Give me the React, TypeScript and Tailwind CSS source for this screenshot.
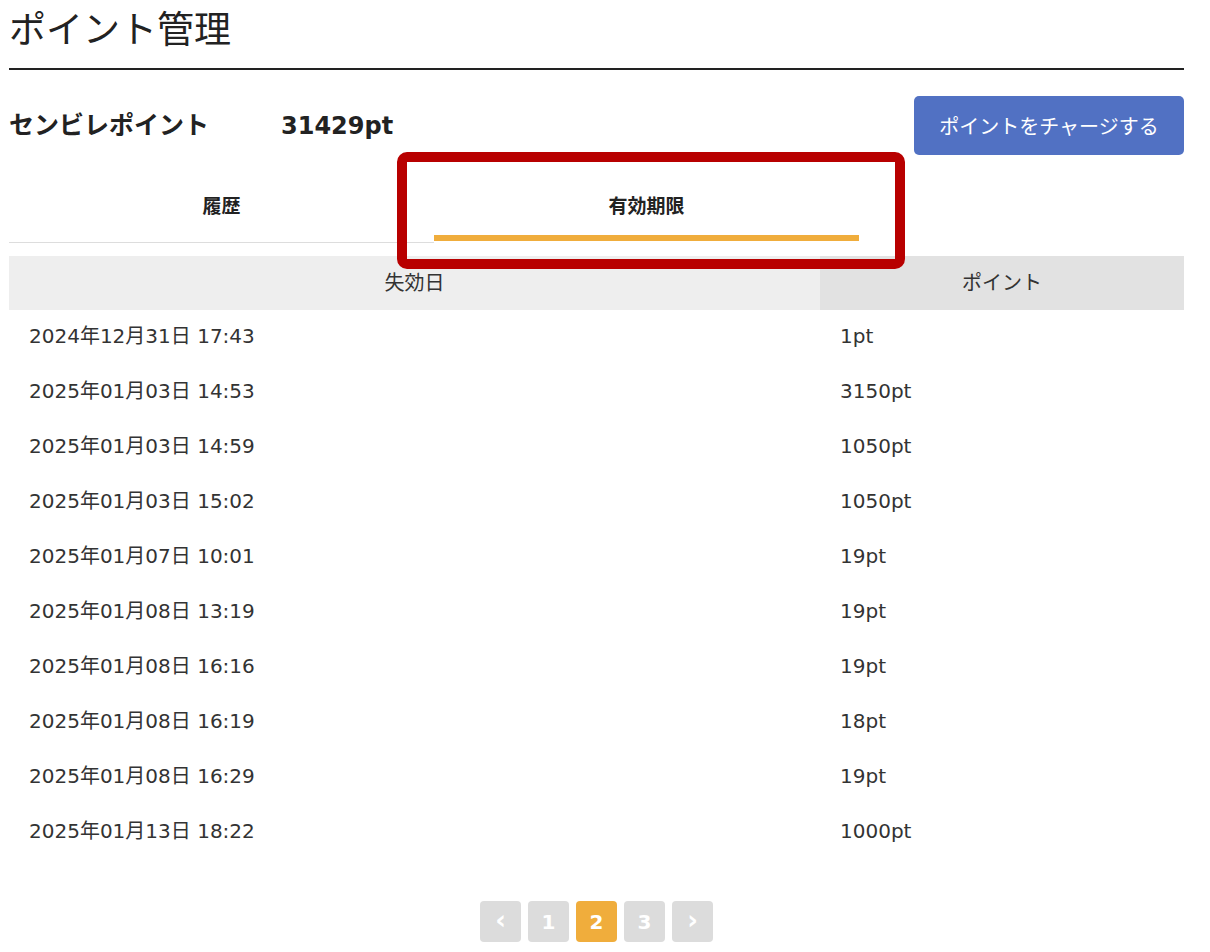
const rows: [string, string][] = [
  ['2024年12月31日 17:43', '1pt'],
  ['2025年01月03日 14:53', '3150pt'],
  ['2025年01月03日 14:59', '1050pt'],
  ['2025年01月03日 15:02', '1050pt'],
  ['2025年01月07日 10:01', '19pt'],
  ['2025年01月08日 13:19', '19pt'],
  ['2025年01月08日 16:16', '19pt'],
  ['2025年01月08日 16:19', '18pt'],
  ['2025年01月08日 16:29', '19pt'],
  ['2025年01月13日 18:22', '1000pt'],
];

const font = { fontFamily: '"DejaVu Sans", "Noto Sans CJK JP", sans-serif' };
const jp = { fontFamily: '"Noto Sans CJK JP", sans-serif' };

export default function App() {
  return (
    <div className="relative min-h-[952px] bg-white text-[#333]" style={font}>
      <div className="w-[1184px] pl-[9px]">
        <h1 className="pt-[1px] text-[37px] leading-[52px] text-[#222] mb-[15px]" style={jp}>
          ポイント管理
        </h1>
        <div className="border-b-2 border-[#222]" />

        <div className="mt-[26px] flex items-center justify-between">
          <div className="flex items-center font-bold text-[#222]">
            <span className="w-[272px] text-[25px]">センビレポイント</span>
            <span className="text-[24px]">31429pt</span>
          </div>
          <button className="h-[59px] w-[270px] rounded-[5px] bg-[#5171c3] text-white text-[20px]" style={jp}>
            ポイントをチャージする
          </button>
        </div>

        <div className="mt-[14px] flex w-[850px]">
          <div className="flex h-[74px] w-[425px] items-center justify-center border-b border-[#dddddd] pt-[1px] text-[19px] font-bold text-[#222]">
            履歴
          </div>
          <div className="relative flex h-[74px] w-[425px] items-center justify-center pt-[1px] text-[19px] font-bold text-[#222]">
            有効期限
            <div className="absolute bottom-[2px] left-0 right-0 h-[6px] bg-[#f0ad3c]" />
          </div>
        </div>

        <table className="mt-[13px] w-full border-collapse text-[20px]">
          <thead>
            <tr className="h-[54px]">
              <th className="w-[811px] bg-[#eeeeee] pb-[1px] font-normal">失効日</th>
              <th className="bg-[#e2e2e2] pb-[1px] font-normal">ポイント</th>
            </tr>
          </thead>
          <tbody>
            {rows.map(([date, pt], i) => (
              <tr key={i} className="h-[55px]">
                <td className="pb-[3px] pl-[20px]">{date}</td>
                <td className="pb-[3px] pl-[20px]">{pt}</td>
              </tr>
            ))}
          </tbody>
        </table>

        <div className="mt-[41px] flex justify-center gap-[7px] text-[20px] font-bold text-white">
          <span className="flex h-[41px] w-[41px] items-center justify-center rounded-[4px] bg-[#dcdcdc] text-[26px] leading-none pb-[3px]">‹</span>
          <span className="flex h-[41px] w-[41px] items-center justify-center rounded-[4px] bg-[#dcdcdc]">1</span>
          <span className="flex h-[41px] w-[41px] items-center justify-center rounded-[4px] bg-[#f0ad3c]">2</span>
          <span className="flex h-[41px] w-[41px] items-center justify-center rounded-[4px] bg-[#dcdcdc]">3</span>
          <span className="flex h-[41px] w-[41px] items-center justify-center rounded-[4px] bg-[#dcdcdc] text-[26px] leading-none pb-[3px]">›</span>
        </div>
      </div>

      <div className="absolute left-[397px] top-[152px] h-[117px] w-[508px] rounded-[10px] border-[10px] border-[#b80000]" />
    </div>
  );
}
